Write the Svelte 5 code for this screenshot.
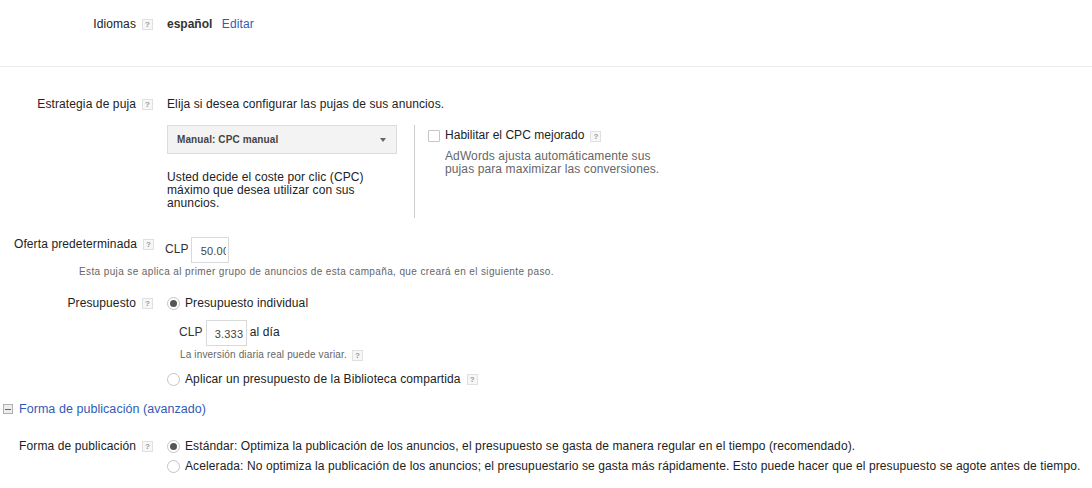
<script>
	// no state needed, the form is static
</script>

{#snippet hint()}
	<span class="hint">?</span>
{/snippet}

<div class="page">
	<section class="row languages">
		<div class="label">Idiomas {@render hint()}</div>
		<div class="body lang-line"><b>español</b> <span class="link">Editar</span></div>
	</section>

	<hr class="divider" />

	<section class="row strategy">
		<div class="label">Estrategia de puja {@render hint()}</div>
		<div class="body">
			<p class="intro">Elija si desea configurar las pujas de sus anuncios.</p>
			<div class="strategy-cols">
				<div class="strategy-left">
					<div class="select">
						<span>Manual: CPC manual</span>
						<i class="caret"></i>
					</div>
					<p class="desc">Usted decide el coste por clic (CPC) máximo que desea utilizar con sus anuncios.</p>
				</div>
				<div class="strategy-right">
					<div class="check-line">
						<span class="checkbox"></span>
						<span class="check-text">Habilitar el CPC mejorado</span>
						{@render hint()}
					</div>
					<p class="muted">AdWords ajusta automáticamente sus pujas para maximizar las conversiones.</p>
				</div>
			</div>
		</div>
	</section>

	<section class="row bid">
		<div class="label wide">Oferta predeterminada {@render hint()}</div>
		<div class="body bid-body">
			<span class="cur">CLP</span>
			<span class="field bid-field"><span class="clip">50.00</span></span>
		</div>
	</section>
	<p class="note bid-note">Esta puja se aplica al primer grupo de anuncios de esta campaña, que creará en el siguiente paso.</p>

	<section class="row budget">
		<div class="label">Presupuesto {@render hint()}</div>
		<div class="body">
			<div class="radio-line">
				<span class="radio on"></span>
				<span>Presupuesto individual</span>
			</div>
			<div class="amount">
				<span class="cur">CLP</span>
				<span class="field amount-field">3.333</span>
				<span>al día</span>
			</div>
			<p class="note budget-note">La inversión diaria real puede variar. {@render hint()}</p>
			<div class="radio-line shared">
				<span class="radio"></span>
				<span>Aplicar un presupuesto de la Biblioteca compartida</span>
				{@render hint()}
			</div>
		</div>
	</section>

	<div class="advanced">
		<span class="minus"></span>
		<span class="link">Forma de publicación (avanzado)</span>
	</div>

	<section class="row delivery">
		<div class="label">Forma de publicación {@render hint()}</div>
		<div class="body">
			<div class="radio-line">
				<span class="radio on"></span>
				<span>Estándar: Optimiza la publicación de los anuncios, el presupuesto se gasta de manera regular en el tiempo (recomendado).</span>
			</div>
			<div class="radio-line second">
				<span class="radio"></span>
				<span>Acelerada: No optimiza la publicación de los anuncios; el presupuestario se gasta más rápidamente. Esto puede hacer que el presupuesto se agote antes de tiempo.</span>
			</div>
		</div>
	</section>
</div>

<style>
	:global(body) {
		margin: 0;
		background: #fff;
	}
	.page {
		width: 1092px;
		height: 488px;
		overflow: hidden;
		font-family: "Liberation Sans", Arial, sans-serif;
		font-size: 12px;
		line-height: 14px;
		letter-spacing: 0.11px;
		color: #222;
	}
	p {
		margin: 0;
	}
	.row {
		display: flex;
		align-items: flex-start;
	}
	.label {
		width: 153px;
		flex: none;
		display: flex;
		justify-content: flex-end;
		align-items: center;
		gap: 6px;
		white-space: nowrap;
	}
	.body {
		margin-left: 14px;
		flex: 1;
		min-width: 0;
	}
	.hint {
		display: inline-block;
		box-sizing: border-box;
		width: 11px;
		height: 11px;
		border: 1px solid #e0e0e0;
		background: #f7f7f7;
		color: #999;
		font-size: 8px;
		font-weight: bold;
		line-height: 9px;
		letter-spacing: 0;
		text-align: center;
		flex: none;
	}
	.link {
		color: #2f5bb7;
	}
	.languages {
		padding-top: 17px;
	}
	.lang-line b {
		color: #333;
		margin-right: 6px;
		letter-spacing: 0;
	}
	.divider {
		border: 0;
		border-top: 1px solid #ebebeb;
		margin: 35px 0 0;
	}
	.strategy {
		margin-top: 30px;
	}
	.intro {
		margin-bottom: 14px;
	}
	.strategy-cols {
		display: flex;
	}
	.strategy-left {
		width: 230px;
		margin-right: 17px;
	}
	.select {
		box-sizing: border-box;
		height: 29px;
		border: 1px solid #dcdcdc;
		background: #f3f3f3;
		display: flex;
		align-items: center;
		justify-content: space-between;
		padding: 0 10px 0 9px;
		color: #444;
		font-size: 10px;
		font-weight: bold;
		letter-spacing: 0.1px;
	}
	.caret {
		width: 0;
		height: 0;
		border: 3.5px solid transparent;
		border-top: 4px solid #666;
		border-bottom: 0;
	}
	.desc {
		margin-top: 17px;
		line-height: 13px;
		padding-bottom: 8px;
	}
	.strategy-right {
		border-left: 1px solid #ccc;
		padding: 3px 0 0 13px;
		height: 90px;
		width: 250px;
	}
	.check-line {
		display: flex;
		align-items: center;
		gap: 4px;
	}
	.check-text {
		letter-spacing: 0.03px;
		margin-bottom: 2px;
	}
	.check-line .hint {
		margin-left: 2px;
	}
	.checkbox {
		box-sizing: border-box;
		width: 12px;
		height: 12px;
		border: 1px solid #c6c6c6;
		border-radius: 1px;
		background: #fff;
		margin-right: 1px;
	}
	.muted {
		margin: 6px 0 0 17px;
		width: 225px;
		line-height: 13px;
		color: #666;
	}
	.bid {
		margin-top: 19px;
	}
	.wide {
		width: 154px;
		height: 14px;
	}
	.bid-body {
		margin-left: 11px;
		margin-top: 5px;
		display: flex;
		align-items: flex-start;
		gap: 2px;
	}
	.cur {
		color: #333;
	}
	.field {
		display: inline-block;
		box-sizing: border-box;
		border: 1px solid #d9d9d9;
		height: 26px;
		line-height: 26px;
		font-size: 11px;
		letter-spacing: 0.2px;
		color: #444;
		background: #fff;
	}
	.bid-field {
		width: 38px;
		padding: 0 2px 0 9px;
		margin-top: -5px;
	}
	.clip {
		display: block;
		overflow: hidden;
		white-space: nowrap;
	}
	.note {
		font-size: 10px;
		line-height: 12px;
		letter-spacing: 0.38px;
		color: #666;
	}
	.bid-note {
		margin: 3px 0 0 79px;
	}
	.budget {
		margin-top: 18px;
	}
	.radio-line {
		display: flex;
		align-items: center;
		gap: 5px;
		white-space: nowrap;
	}
	.radio {
		box-sizing: border-box;
		width: 13px;
		height: 13px;
		flex: none;
		border: 1px solid #c4c4c4;
		border-radius: 50%;
		background: #fff;
		position: relative;
	}
	.radio.on::after {
		content: "";
		position: absolute;
		left: 2px;
		top: 2px;
		width: 7px;
		height: 7px;
		border-radius: 50%;
		background: #555;
	}
	.amount {
		display: flex;
		align-items: flex-start;
		gap: 3px;
		margin: 10px 0 0 12px;
	}
	.amount > span:not(.field) {
		margin-top: 5px;
	}
	.amount-field {
		width: 41px;
		padding-left: 8px;
	}
	.budget-note {
		margin: 3px 0 0 13px;
		display: flex;
		align-items: center;
		gap: 5px;
		height: 12px;
		letter-spacing: 0.15px;
	}
	.shared {
		margin-top: 11px;
	}
	.shared .hint {
		margin-left: 1px;
	}
	.advanced {
		display: flex;
		align-items: center;
		gap: 6px;
		margin: 16px 0 0 3px;
		font-size: 12.5px;
		letter-spacing: 0.05px;
	}
	.minus {
		box-sizing: border-box;
		width: 10px;
		height: 10px;
		border: 1px solid #b0b0b0;
		background: linear-gradient(#666, #666) center / 6px 1px no-repeat #eee;
	}
	.delivery {
		margin-top: 23px;
	}
	.second {
		margin-top: 6px;
	}
</style>
